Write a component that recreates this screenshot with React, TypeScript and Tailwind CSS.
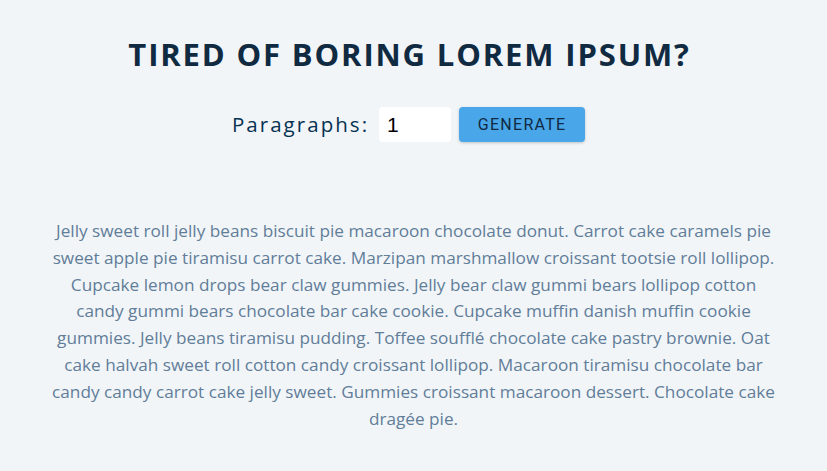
import { useState } from 'react';

const TEXT =
  'Jelly sweet roll jelly beans biscuit pie macaroon chocolate donut. Carrot cake caramels pie sweet apple pie tiramisu carrot cake. Marzipan marshmallow croissant tootsie roll lollipop. Cupcake lemon drops bear claw gummies. Jelly bear claw gummi bears lollipop cotton candy gummi bears chocolate bar cake cookie. Cupcake muffin danish muffin cookie gummies. Jelly beans tiramisu pudding. Toffee soufflé chocolate cake pastry brownie. Oat cake halvah sweet roll cotton candy croissant lollipop. Macaroon tiramisu chocolate bar candy candy carrot cake jelly sweet. Gummies croissant macaroon dessert. Chocolate cake dragée pie.';

export default function App() {
  const [count, setCount] = useState('1');

  return (
    <div className="min-h-[471px] bg-[#f1f5f8] pt-[35px] font-['Open_Sans',sans-serif]">
      <section className="mx-auto w-[730px] text-center">
        <h3 className="-translate-x-[4px] text-[31px] font-bold uppercase leading-[39px] tracking-[0.06em] text-[#102a42]">
          Tired of boring lorem ipsum?
        </h3>

        <form
          className="mt-[33px] flex -translate-x-[5px] items-center justify-center"
          onSubmit={(e) => e.preventDefault()}
        >
          <label htmlFor="amount" className="text-[20.5px] tracking-[0.1em] text-[#063251]">
            Paragraphs:
          </label>
          <input
            id="amount"
            type="number"
            value={count}
            onChange={(e) => setCount(e.target.value)}
            className="ml-[10px] mr-2 h-[35px] w-[72px] rounded-[4px] bg-white px-2 text-[21px] text-black outline-none [appearance:textfield] font-['Liberation_Sans',sans-serif]"
          />
          <button
            type="submit"
            className="h-[35px] w-[126px] rounded-[4px] bg-[#49a6e9] text-[16px] uppercase tracking-[0.08em] text-[#102a42] shadow-[0_1px_3px_rgba(0,0,0,0.2)] font-['Roboto',sans-serif]"
          >
            Generate
          </button>
        </form>

        <article className="mt-[76px]">
          <p className="text-[17.2px] leading-[26.8px] text-[#617d98]">{TEXT}</p>
        </article>
      </section>
    </div>
  );
}
